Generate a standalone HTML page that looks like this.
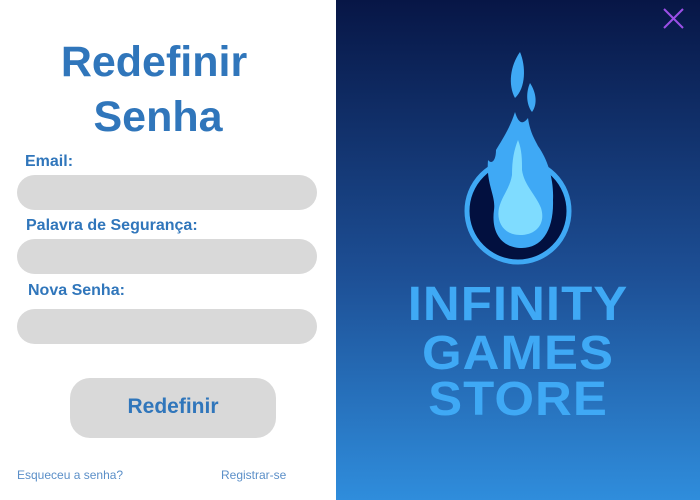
<!DOCTYPE html>
<html><head><meta charset="utf-8"><style>
*{margin:0;padding:0;box-sizing:border-box}
body{width:700px;height:500px;position:relative;background:#fff;font-family:"Liberation Sans",sans-serif;overflow:hidden}
.t{position:absolute;color:#3076bb;font-weight:bold;white-space:nowrap}
.lbl{position:absolute;color:#3076bb;font-weight:bold;font-size:16px}
.in{position:absolute;left:17px;width:300px;height:35px;background:#d9d9d9;border-radius:18px}
.right{position:absolute;left:336px;top:0;width:364px;height:500px;background:linear-gradient(#071646,#1d4f95 55%,#2f8ddc)}
.big{position:absolute;left:0;width:380px;text-align:center;color:#3fa9f5;font-weight:bold;font-size:51px;letter-spacing:1px;line-height:50px;transform:scaleY(0.95)}
.lnk{position:absolute;top:468px;font-size:12px;color:#5b8fc8}
</style></head><body>
<div class="t" style="left:58px;top:38px;font-size:43px;width:192px;text-align:center">Redefinir</div>
<div class="t" style="left:58px;top:93px;font-size:43px;width:200px;text-align:center">Senha</div>
<div class="lbl" style="left:25px;top:153px">Email:</div>
<div class="in" style="top:175px"></div>
<div class="lbl" style="left:26px;top:217px">Palavra de Segurança:</div>
<div class="in" style="top:239px"></div>
<div class="lbl" style="left:28px;top:282px">Nova Senha:</div>
<div class="in" style="top:309px"></div>
<div style="position:absolute;left:70px;top:378px;width:206px;height:60px;background:#d9d9d9;border-radius:20px;color:#3076bb;font-weight:bold;font-size:21px;text-align:center;line-height:58px">Redefinir</div>
<div class="lnk" style="left:17px">Esqueceu a senha?</div>
<div class="lnk" style="left:221px">Registrar-se</div>
<div class="right">
<svg width="364" height="500" style="position:absolute;left:0;top:0">
<line x1="328" y1="9" x2="347" y2="28" stroke="#9b4fe6" stroke-width="2"/>
<line x1="347" y1="9" x2="328" y2="28" stroke="#9b4fe6" stroke-width="2"/>
<circle cx="182" cy="211" r="51" fill="#02103f" stroke="#3fa9f5" stroke-width="5"/>
<path d="M186 248 C165 248 155 232 158 210 C160 195 150 185 152 160 C156 165 160 160 160 150 C166 140 174 128 179 112 C182 122 186 126 192 118 C194 132 198 138 202 146 C212 160 218 180 217 200 C218 230 206 248 186 248 Z" fill="#3fa9f5"/>
<path d="M184 52 C174 66 172 85 179 98 C190 88 190 66 184 52 Z M194 83 C190 92 190 104 196 112 C202 104 200 92 194 83 Z" fill="#3fa9f5"/>
<path d="M184 235 C168 235 160 222 163 208 C166 196 174 188 176 175 C176 160 178 150 182 140 C186 150 186 160 186 170 C188 185 200 195 205 208 C210 224 200 235 184 235 Z" fill="#7fdcff"/>
</svg>
<div class="big" style="top:279px;left:-8px">INFINITY</div>
<div class="big" style="top:328px;left:-8px">GAMES</div>
<div class="big" style="top:374px;left:-8px">STORE</div>
</div>
</body></html>
